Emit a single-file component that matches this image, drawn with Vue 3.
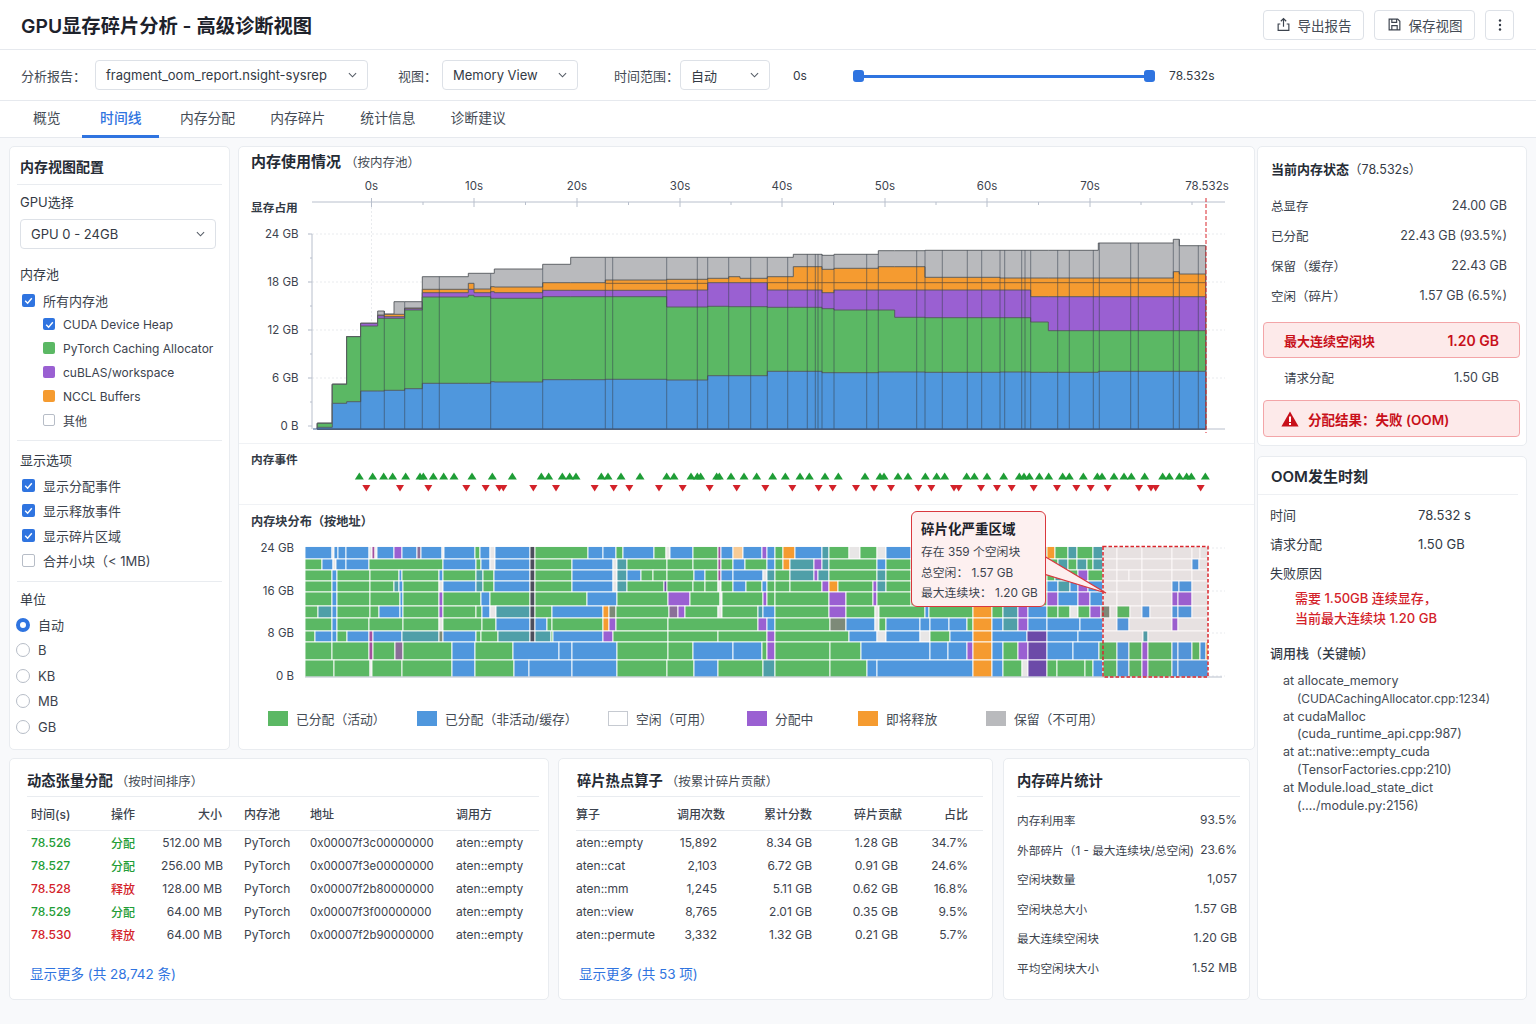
<script setup>
// 时间线图：zoom 坐标换算成页面坐标
const lx = (v) => 240 + v / 3
const rx = (v) => 740 + v / 3
const zy = (v) => 150 + v / 3

// [起点, 终点, 蓝, 绿, 紫, 橙, 灰]
const leftSegs = [
  [232, 277, 832, 820, 820, 820, 820],
  [277, 320, 760, 703, 703, 703, 703],
  [320, 362, 755, 560, 560, 560, 560],
  [362, 413, 723, 528, 520, 520, 520],
  [413, 433, 723, 505, 497, 495, 483],
  [433, 462, 721, 505, 500, 493, 492],
  [462, 494, 721, 505, 500, 493, 455],
  [494, 547, 716, 480, 476, 474, 455],
  [547, 685, 700, 441, 428, 418, 380],
  [685, 702, 700, 436, 418, 400, 370],
  [702, 752, 700, 440, 428, 417, 370],
  [752, 763, 695, 445, 425, 410, 370],
  [763, 908, 696, 445, 428, 411, 357],
  [908, 992, 689, 440, 421, 398, 343],
  [992, 1096, 689, 440, 421, 398, 322],
  [1096, 1280, 688, 440, 421, 390, 322],
  [1280, 1403, 690, 471, 420, 388, 322],
  [1403, 1466, 677, 469, 398, 385, 322],
  [1466, 1500, 677, 470, 398, 380, 322],
]
const rightSegs = [
  [0, 82, 677, 470, 398, 385, 322],
  [82, 160, 664, 472, 420, 380, 322],
  [160, 246, 664, 472, 420, 350, 313],
  [246, 282, 668, 476, 428, 358, 316],
  [282, 415, 668, 480, 420, 355, 313],
  [415, 464, 666, 480, 420, 350, 302],
  [464, 555, 666, 502, 420, 350, 302],
  [555, 780, 667, 503, 420, 382, 301],
  [780, 872, 666, 503, 420, 384, 301],
  [872, 925, 667, 516, 440, 384, 301],
  [925, 1075, 667, 542, 440, 384, 301],
  [1075, 1300, 664, 542, 440, 384, 279],
  [1300, 1318, 664, 542, 440, 365, 268],
  [1318, 1397, 664, 542, 440, 372, 287],
]
const segs = [
  ...leftSegs.map((s) => [lx(s[0]), lx(s[1]), ...s.slice(2).map(zy)]),
  ...rightSegs.map((s) => [rx(s[0]), rx(s[1]), ...s.slice(2).map(zy)]),
]
const layerColors = [
  { idx: 6, color: '#b9babd' },
  { idx: 5, color: '#f59b30' },
  { idx: 4, color: '#9a60d2' },
  { idx: 3, color: '#5bb864' },
  { idx: 2, color: '#4f97dd' },
]
const base = 429
const layers = layerColors.map((l) => {
  let d = `M${segs[0][0]} ${base}`
  segs.forEach((s) => {
    d += `L${s[0].toFixed(1)} ${s[l.idx].toFixed(1)}L${s[1].toFixed(1)} ${s[l.idx].toFixed(1)}`
  })
  d += `L${segs[segs.length - 1][1].toFixed(1)} ${base}Z`
  return { d, color: l.color }
})
const vLinesRaw = [
  ...[362, 433, 494, 547, 598, 752, 908, 1096, 1118, 1280, 1372, 1403, 1466].map(lx),
  ...[32, 82, 143, 202, 226, 234, 246, 282, 380, 415, 530, 555, 607, 682, 725, 780, 794, 845, 855, 872, 953, 988, 1060, 1078, 1172, 1195, 1300, 1318, 1375].map(rx),
]
const vLines = vLinesRaw.map((x) => {
  const seg = segs.find((s) => x >= s[0] && x <= s[1]) || segs[0]
  return { x: x.toFixed(1), top: seg[6].toFixed(1) }
})
const orangeLine = `M${lx(1096)} ${zy(400)}L${lx(1403)} ${zy(400)}M${rx(82)} ${zy(398)}L${rx(1397)} ${zy(398)}`

const timeTicks = [
  ['0s', 371.5], ['10s', 474], ['20s', 577], ['30s', 680], ['40s', 782], ['50s', 885], ['60s', 987], ['70s', 1090],
]
const minorTicks = [423, 525.5, 628.5, 731, 833.5, 936, 1038.5, 1141, 1192]
const memTicks = [['24 GB', 234], ['18 GB', 282], ['12 GB', 330], ['6 GB', 378]]
const minorMem = [258, 306, 354, 402]

const upEvents = [
  ...[358, 398, 431, 458, 497, 540, 550, 580, 611, 642, 696, 757, 817, 904, 926, 967, 989, 1008, 1084, 1104, 1143, 1200, 1280, 1302, 1353, 1372, 1382, 1430, 1438, 1473].map(lx),
  ...[12, 50, 98, 136, 180, 208, 255, 295, 375, 420, 432, 474, 504, 556, 590, 614, 680, 703, 741, 791, 838, 852, 868, 898, 926, 968, 988, 1030, 1072, 1086, 1122, 1152, 1174, 1214, 1268, 1288, 1318, 1340, 1354, 1396].map(rx),
]
const downEvents = [
  ...[379, 480, 565, 679, 737, 778, 790, 880, 948, 1064, 1121, 1168, 1257, 1328, 1409, 1490].map(lx),
  ...[76, 157, 236, 278, 348, 402, 453, 535, 574, 642, 656, 723, 771, 815, 881, 951, 1009, 1052, 1103, 1197, 1233, 1247, 1382].map(rx),
]
const upPts = (x) => `${x - 4.5},479.5 ${x + 4.5},479.5 ${x},472.5`
const downPts = (x) => `${x - 4},485 ${x + 4},485 ${x},491.5`

// 内存块分布：每行一串 “颜色+结束x”
const blockColors = {
  g: '#5bb864', b: '#4f97dd', p: '#9a60d2', o: '#f59b30', l: '#e8e6e6', m: '#a4509f', q: '#8a6f98',
  d: '#4c4e5c', t: '#4f9fa8', e: '#f8cb95', D: '#6c4aa8', k: '#7d8a78', y: '#b9babd',
}
const rows = [
  [546.5, 559, 'b332 l334 b338 b346 b369 l372 m375 l377 b394 p402 b417 q421 b442 l444 b475 g480 b490 l495 b530 d535 g588 b603 b616 g623 b654 g666 l670 b693 g718 m721 b733 e743 b762 p767 b775 g783 o795 b822 t829 g849 l860 g877 l886 b911 g1047 o1055 g1068 t1077 g1093 t1103 l1117 l1142 l1172 l1192 l1200 l1208'],
  [559, 570, 'g322 b333 l336 b346 b369 g443 b476 g481 b490 l495 b530 d535 g572 b613 l617 t627 g667 g693 g718 m721 g733 b745 g767 b775 g783 o790 t814 p822 t829 g877 b886 g911 g1047 g1058 t1068 g1077 t1087 g1093 t1103 l1117 l1142 l1172 l1192 b1199 l1208'],
  [570, 581, 'g332 b337 g370 g399 b402 g439 b443 g476 t483 g494 b530 d535 g572 b613 l617 t627 b641 g653 g667 g694 b705 g718 m721 b733 b763 l767 t775 g790 t814 p818 t829 g877 t886 g911 g1047 g1055 t1068 g1078 p1088 g1103 l1117 l1129 l1142 l1172 l1192 l1208'],
  [581, 592, 'g332 b337 g370 g394 t399 b403 g439 l443 b476 t483 g494 b530 d535 g572 b613 l617 t627 g664 D667 g693 g705 g718 l721 g733 b746 g762 b767 g775 g790 g822 p829 o838 g873 p877 t886 g911 g1047 b1058 t1070 b1078 p1088 b1103 l1117 l1142 l1172 b1179 b1192 l1208'],
  [592, 606, 'g332 b337 g370 g400 b403 g439 p443 g481 b490 g530 d535 g587 b617 g668 p690 g720 l722 g763 p767 g775 g829 p846 g873 p877 g911 g1047 p1058 b1078 p1090 b1103 l1117 l1142 l1172 p1178 p1192 l1208'],
  [606, 618, 'g318 t332 b337 g370 g379 b400 b403 g439 p443 g476 g482 b490 l496 t530 d535 g552 b603 o609 k616 g669 q678 p685 g718 l722 g758 t763 b775 g829 p846 g875 l879 g925 b929 g973 o992 g1003 t1018 p1028 b1047 g1058 g1070 l1078 g1090 p1101 k1110 l1117 g1130 l1142 b1150 l1172 b1178 b1192 l1208'],
  [618, 631, 'g332 b337 g369 g403 g439 l443 g482 g496 b530 d535 b547 g552 g603 o609 p616 g668 g758 p767 b775 g830 k846 b875 l879 g886 b920 b930 b949 b967 g973 o992 b1003 t1018 p1028 b1047 b1080 b1103 l1117 b1129 l1172 p1178 l1208'],
  [631, 642, 'g315 b332 b337 g347 b369 m373 b402 t439 k443 b476 g481 g498 t530 d535 t551 g553 b603 p613 g668 g718 g767 p775 g849 b877 l886 b920 l930 g950 b973 o992 b1027 D1047 b1078 b1103 l1143 t1148 l1208'],
  [642, 660, 'g332 g369 m373 g395 q403 g452 b475 g513 b559 b572 b617 g668 g693 b733 b762 g767 p775 g830 g861 b930 b948 b967 p973 o992 b1003 g1018 p1028 D1047 b1073 b1099 g1117 b1129 g1142 p1148 g1172 b1178 b1192 g1200 b1206 o1208'],
  [660, 677, 'g334 g370 l372 g402 g452 b475 g514 b529 b572 b617 g667 g694 b718 g763 t775 g830 g867 b877 b973 o992 b1003 g1022 l1028 D1047 g1057 g1085 g1093 b1103 g1117 b1129 g1142 p1148 g1172 b1178 b1208'],
]
const blocks = []
rows.forEach(([y0, y1, str]) => {
  let start = 305
  str.split(' ').forEach((tok) => {
    const end = Number(tok.slice(1))
    blocks.push({ x: start, y: y0, w: Math.max(end - start, 0.5), h: y1 - y0, c: blockColors[tok[0]] })
    start = end
  })
})
const blockTicks = [['24 GB', 548], ['16 GB', 591], ['8 GB', 633], ['0 B', 676]]

const legend = [
  { label: '已分配（活动）', cls: 'lg-green' },
  { label: '已分配（非活动/缓存）', cls: 'lg-blue' },
  { label: '空闲（可用）', cls: 'lg-free' },
  { label: '分配中', cls: 'lg-purple' },
  { label: '即将释放', cls: 'lg-orange' },
  { label: '保留（不可用）', cls: 'lg-gray' },
]

const tabs = ['概览', '时间线', '内存分配', '内存碎片', '统计信息', '诊断建议']
const pools = [
  { label: 'CUDA Device Heap', cls: 'on' },
  { label: 'PyTorch Caching Allocator', cls: 'sw-green' },
  { label: 'cuBLAS/workspace', cls: 'sw-purple' },
  { label: 'NCCL Buffers', cls: 'sw-orange' },
  { label: '其他', cls: 'off' },
]
const showOpts = [
  { label: '显示分配事件', on: true },
  { label: '显示释放事件', on: true },
  { label: '显示碎片区域', on: true },
  { label: '合并小块（< 1MB)', on: false },
]
const units = ['自动', 'B', 'KB', 'MB', 'GB']

const memStats = [
  ['总显存', '24.00 GB'],
  ['已分配', '22.43 GB (93.5%)'],
  ['保留（缓存）', '22.43 GB'],
  ['空闲（碎片）', '1.57 GB (6.5%)'],
]
const stack = [
  ['at allocate_memory', false],
  ['(CUDACachingAllocator.cpp:1234)', true],
  ['at cudaMalloc', false],
  ['(cuda_runtime_api.cpp:987)', true],
  ['at at::native::empty_cuda', false],
  ['(TensorFactories.cpp:210)', true],
  ['at Module.load_state_dict', false],
  ['(…./module.py:2156)', true],
]
const tensors = [
  ['78.526', '分配', '512.00 MB', 'PyTorch', '0x00007f3c00000000', 'aten::empty', 'up'],
  ['78.527', '分配', '256.00 MB', 'PyTorch', '0x00007f3e00000000', 'aten::empty', 'up'],
  ['78.528', '释放', '128.00 MB', 'PyTorch', '0x00007f2b80000000', 'aten::empty', 'down'],
  ['78.529', '分配', '64.00 MB', 'PyTorch', '0x00007f3f00000000', 'aten::empty', 'up'],
  ['78.530', '释放', '64.00 MB', 'PyTorch', '0x00007f2b90000000', 'aten::empty', 'down'],
]
const hotOps = [
  ['aten::empty', '15,892', '8.34 GB', '1.28 GB', '34.7%'],
  ['aten::cat', '2,103', '6.72 GB', '0.91 GB', '24.6%'],
  ['aten::mm', '1,245', '5.11 GB', '0.62 GB', '16.8%'],
  ['aten::view', '8,765', '2.01 GB', '0.35 GB', '9.5%'],
  ['aten::permute', '3,332', '1.32 GB', '0.21 GB', '5.7%'],
]
const fragStats = [
  ['内存利用率', '93.5%'],
  ['外部碎片（1 - 最大连续块/总空闲)', '23.6%'],
  ['空闲块数量', '1,057'],
  ['空闲块总大小', '1.57 GB'],
  ['最大连续空闲块', '1.20 GB'],
  ['平均空闲块大小', '1.52 MB'],
]
</script>

<template>
  <div class="page">
    <header class="topbar">
      <h1>GPU显存碎片分析 - 高级诊断视图</h1>
      <div class="actions">
        <button class="btn">
          <svg width="15" height="15" viewBox="0 0 14 14" fill="none" stroke="#3c434e" stroke-width="1.1"><path d="M7 9V1.5M4.5 4L7 1.5 9.5 4M4 6.5H2v6h10v-6h-2" /></svg>
          导出报告
        </button>
        <button class="btn">
          <svg width="15" height="15" viewBox="0 0 14 14" fill="none" stroke="#3c434e" stroke-width="1.1"><path d="M2 2h8l2 2v8H2zM4.5 2v3h4.5V2M4.5 12V8h5v4" /></svg>
          保存视图
        </button>
        <button class="btn more">
          <svg width="4" height="14" viewBox="0 0 4 14" fill="#333a45"><circle cx="2" cy="2.5" r="1.2" /><circle cx="2" cy="7" r="1.2" /><circle cx="2" cy="11.5" r="1.2" /></svg>
        </button>
      </div>
    </header>

    <div class="toolbar">
      <span class="tool-label">分析报告：</span>
      <div class="select report">
        <span>fragment_oom_report.nsight-sysrep</span>
        <svg class="chev" viewBox="0 0 10 6"><path d="M1 1l4 4 4-4" /></svg>
      </div>
      <span class="tool-label view-label">视图：</span>
      <div class="select view">
        <span>Memory View</span>
        <svg class="chev" viewBox="0 0 10 6"><path d="M1 1l4 4 4-4" /></svg>
      </div>
      <span class="tool-label range-label">时间范围：</span>
      <div class="select range">
        <span>自动</span>
        <svg class="chev" viewBox="0 0 10 6"><path d="M1 1l4 4 4-4" /></svg>
      </div>
      <span class="range-start">0s</span>
      <div class="slider"><i class="thumb"></i><i class="thumb"></i></div>
      <span class="range-end">78.532s</span>
    </div>

    <nav class="tabs">
      <a v-for="t in tabs" :key="t" :class="{ active: t === '时间线' }">{{ t }}</a>
    </nav>

    <main class="layout">
      <div class="left-area">
        <div class="top-row">
          <aside class="card sidebar">
            <div class="side-title">内存视图配置</div>
            <div class="side-sec">
              <div class="side-label first">GPU选择</div>
              <div class="select gpu">
                <span>GPU 0 - 24GB</span>
                <svg class="chev" viewBox="0 0 10 6"><path d="M1 1l4 4 4-4" /></svg>
              </div>
              <div class="side-label pool-label">内存池</div>
              <label class="opt">
                <i class="check"><svg viewBox="0 0 10 10"><path d="M2 5.2l2.2 2.2L8 3" /></svg></i>所有内存池
              </label>
              <label v-for="p in pools" :key="p.label" class="opt sub">
                <i v-if="p.cls === 'on'" class="check small"><svg viewBox="0 0 10 10"><path d="M2 5.2l2.2 2.2L8 3" /></svg></i>
                <i v-else class="swatch" :class="p.cls"></i>{{ p.label }}
              </label>
            </div>
            <div class="side-sec ruled show-sec">
              <div class="side-label">显示选项</div>
              <label v-for="o in showOpts" :key="o.label" class="opt opt-show">
                <i v-if="o.on" class="check"><svg viewBox="0 0 10 10"><path d="M2 5.2l2.2 2.2L8 3" /></svg></i>
                <i v-else class="swatch off big"></i>{{ o.label }}
              </label>
            </div>
            <div class="side-sec ruled unit-sec">
              <div class="side-label">单位</div>
              <label v-for="(u, i) in units" :key="u" class="opt opt-unit">
                <i class="radio" :class="{ sel: i === 0 }"></i>{{ u }}
              </label>
            </div>
          </aside>

          <section class="card center">
            <div class="center-title"><b>内存使用情况</b><span>（按内存池）</span></div>
            <svg class="chart" width="1015" height="267" viewBox="239 176 1015 267">
              <text class="ax-title" x="251" y="212">显存占用</text>
              <line x1="312" y1="202" x2="1225" y2="202" class="axis" />
              <line v-for="m in minorTicks" :key="m" :x1="m" y1="202" :x2="m" y2="205" class="axis" />
              <template v-for="t in timeTicks" :key="t[0]">
                <line :x1="t[1]" y1="198" :x2="t[1]" y2="207" class="axis" />
                <text class="ax" :x="t[1]" y="190" text-anchor="middle">{{ t[0] }}</text>
              </template>
              <text class="ax" x="1207" y="190" text-anchor="middle">78.532s</text>
              <line x1="371.5" y1="207" x2="371.5" y2="429" class="grid" />
              <template v-for="t in memTicks" :key="t[0]">
                <line x1="308" :y1="t[1]" x2="1225" :y2="t[1]" class="grid" />
                <line x1="308" :y1="t[1]" x2="312" :y2="t[1]" class="axis" />
                <text class="ax" x="298.5" :y="t[1] + 4" text-anchor="end">{{ t[0] }}</text>
              </template>
              <line v-for="m in minorMem" :key="m" x1="310" :y1="m" x2="312" :y2="m" class="axis" />
              <text class="ax" x="298.5" y="430" text-anchor="end">0 B</text>
              <line x1="312" y1="234" x2="312" y2="429" class="axis" />
              <line x1="308" y1="426" x2="312" y2="426" class="axis" />
              <line x1="1206" y1="429" x2="1225" y2="429" class="axis" />
              <path v-for="l in layers" :key="l.color" :d="l.d" :fill="l.color" class="area" />
              <line v-for="v in vLines" :key="v.x" :x1="v.x" :y1="v.top" :x2="v.x" y2="429" class="sep" />
              <path :d="orangeLine" class="orange-line" />
              <line x1="313" y1="429" x2="1206" y2="429" class="base" />
              <line x1="1206" y1="198" x2="1206" y2="433" class="oom-line" />
            </svg>

            <div class="events-wrap">
              <svg class="events" width="1015" height="60" viewBox="239 444 1015 60">
                <text class="ax-title" x="251" y="464">内存事件</text>
                <polygon v-for="(x, i) in upEvents" :key="'u' + i" :points="upPts(x)" fill="#1f9d36" />
                <polygon v-for="(x, i) in downEvents" :key="'d' + i" :points="downPts(x)" fill="#d3222a" />
              </svg>
            </div>

            <div class="blocks-wrap">
              <svg class="chart" width="1015" height="197" viewBox="239 505 1015 197">
                <text class="ax-title blocks-title" x="251" y="526">内存块分布（按地址）</text>
                <template v-for="t in blockTicks" :key="t[0]">
                  <text class="ax" x="294" :y="t[1] + 4" text-anchor="end">{{ t[0] }}</text>
                  <line x1="1208" :y1="t[1]" x2="1225" :y2="t[1]" class="grid" />
                </template>
                <rect x="305" y="546" width="903" height="131" fill="#fff" />
                <rect v-for="(b, i) in blocks" :key="i" :x="b.x" :y="b.y" :width="b.w" :height="b.h" :fill="b.c" stroke="#fff" stroke-width="0.9" />
                <line x1="305" y1="677" x2="1222" y2="677" class="axis" />
                <rect x="1103" y="546.5" width="105" height="130.5" class="hot-zone" />
                <polygon points="1044,556 1106,593 1044,574" class="arrow" />
              </svg>
              <div class="tip">
                <div class="tip-title">碎片化严重区域</div>
                <div>存在 359 个空闲块</div>
                <div>总空闲： 1.57 GB</div>
                <div>最大连续块： 1.20 GB</div>
              </div>
            </div>

            <div class="legend">
              <span v-for="l in legend" :key="l.label" class="lg-item"><i :class="l.cls"></i>{{ l.label }}</span>
            </div>
          </section>
        </div>

        <div class="bottom-row">
          <section class="card tensors">
            <div class="card-head"><b>动态张量分配</b><span>（按时间排序）</span></div>
            <div class="t-row t-head tensor-grid">
              <span>时间(s)</span><span>操作</span><span class="num">大小</span><span class="pad">内存池</span><span>地址</span><span>调用方</span>
            </div>
            <div v-for="r in tensors" :key="r[0]" class="t-row tensor-grid">
              <span :class="r[6]">{{ r[0] }}</span><span :class="r[6]">{{ r[1] }}</span><span class="num">{{ r[2] }}</span><span class="pad">{{ r[3] }}</span><span class="addr">{{ r[4] }}</span><span>{{ r[5] }}</span>
            </div>
            <a class="more-link tensor-more">显示更多 (共 28,742 条)</a>
          </section>

          <section class="card hot">
            <div class="card-head"><b>碎片热点算子</b><span>（按累计碎片贡献）</span></div>
            <div class="t-row t-head hot-grid">
              <span>算子</span><span class="num">调用次数</span><span class="num">累计分数</span><span class="num">碎片贡献</span><span class="num">占比</span>
            </div>
            <div v-for="r in hotOps" :key="r[0]" class="t-row hot-grid">
              <span>{{ r[0] }}</span><span class="num calls">{{ r[1] }}</span><span class="num">{{ r[2] }}</span><span class="num frag">{{ r[3] }}</span><span class="num">{{ r[4] }}</span>
            </div>
            <a class="more-link hot-more">显示更多 (共 53 项)</a>
          </section>

          <section class="card frag-stats">
            <div class="card-head frag-head"><b>内存碎片统计</b></div>
            <div class="frag-list">
              <div v-for="r in fragStats" :key="r[0]" class="frag-row"><span class="frag-name">{{ r[0] }}</span><span>{{ r[1] }}</span></div>
            </div>
          </section>
        </div>
      </div>

      <div class="right-col">
        <section class="card status">
          <div class="status-title"><b>当前内存状态</b><span>（78.532s）</span></div>
          <div class="status-list">
            <div v-for="r in memStats" :key="r[0]" class="status-row"><span>{{ r[0] }}</span><span>{{ r[1] }}</span></div>
          </div>
          <div class="alert largest"><span>最大连续空闲块</span><span>1.20 GB</span></div>
          <div class="status-row req"><span>请求分配</span><span>1.50 GB</span></div>
          <div class="alert result">
            <svg width="18" height="16" viewBox="0 0 18 16"><path d="M9 .5L17.6 15.5H.4z" fill="#c8101a" /><rect x="8" y="5.5" width="2" height="5.5" fill="#fff" /><rect x="8" y="12" width="2" height="2" fill="#fff" /></svg>
            <span>分配结果：失败 (OOM)</span>
          </div>
        </section>

        <section class="card oom">
          <div class="oom-title">OOM发生时刻</div>
          <div class="oom-row"><span>时间</span><span>78.532 s</span></div>
          <div class="oom-row"><span>请求分配</span><span>1.50 GB</span></div>
          <div class="oom-row"><span>失败原因</span></div>
          <div class="reason">需要 1.50GB 连续显存，</div>
          <div class="reason">当前最大连续块 1.20 GB</div>
          <div class="stack-title">调用栈（关键帧）</div>
          <div class="stack">
            <div v-for="s in stack" :key="s[0]" :class="{ indent: s[1] }">{{ s[0] }}</div>
          </div>
        </section>
      </div>
    </main>
  </div>
</template>

<style scoped>
.page {
  width: 1536px;
  height: 1024px;
  overflow: hidden;
  background: #f8f9fb;
  color: #333a45;
  font-family: Inter, "Noto Sans CJK SC", sans-serif;
  font-size: 13px;
}
.topbar {
  height: 50px;
  box-sizing: border-box;
  display: flex;
  align-items: center;
  justify-content: space-between;
  padding: 0 22px 0 21px;
  background: #fff;
  border-bottom: 1px solid #e6e9ee;
}
h1 {
  margin: 0;
  font-size: 19.3px;
  font-weight: 600;
  color: #1d222b;
}
.actions {
  display: flex;
  gap: 10px;
}
.btn {
  height: 30px;
  width: 101px;
  display: flex;
  align-items: center;
  justify-content: center;
  gap: 7px;
  background: #fff;
  border: 1px solid #dde1e7;
  border-radius: 4px;
  color: #444b55;
  font: inherit;
  font-size: 13.5px;
}
.btn.more {
  width: 29px;
}
.toolbar {
  height: 51px;
  box-sizing: border-box;
  display: flex;
  align-items: center;
  padding-left: 21px;
  background: #fff;
  border-bottom: 1px solid #e6e9ee;
}
.tool-label {
  color: #444b55;
  font-size: 13px;
}
.select {
  height: 30px;
  box-sizing: border-box;
  display: flex;
  align-items: center;
  justify-content: space-between;
  padding: 0 10px;
  background: #fff;
  border: 1px solid #dde1e7;
  border-radius: 4px;
  font-size: 13px;
  color: #333a45;
}
.chev {
  width: 9px;
  height: 6px;
  fill: none;
  stroke: #555c66;
  stroke-width: 1.2;
}
.report {
  width: 273px;
  margin-left: 9px;
}
.view-label {
  margin-left: 30px;
}
.view {
  width: 136px;
  margin-left: 5px;
}
.range-label {
  margin-left: 36px;
}
.range {
  width: 90px;
  margin-left: 1px;
}
.range-start {
  margin-left: 23px;
  width: 60px;
  font-size: 12px;
  margin-top: 1px;
}
.slider {
  width: 302px;
  height: 3px;
  margin-right: 14px;
  margin-top: 2px;
  background: #2f74e0;
  display: flex;
  align-items: center;
  justify-content: space-between;
}
.thumb {
  width: 11px;
  height: 12px;
  border-radius: 3px;
  background: #2f74e0;
}
.range-end {
  font-size: 12px;
  margin-top: 1px;
}
.tabs {
  height: 37px;
  display: flex;
  padding-left: 15.5px;
  background: #fff;
  border-bottom: 1px solid #e6e9ee;
  box-sizing: border-box;
}
.tabs a {
  padding: 0 17.5px;
  line-height: 34px;
  font-size: 13.8px;
  color: #444b55;
}
.tabs a.active {
  color: #2f74e0;
  font-weight: 500;
  padding: 0 18px;
  margin: 0 3px 0 4px;
  border-bottom: 3px solid #2f74e0;
  height: 37px;
  box-sizing: border-box;
}
.layout {
  display: flex;
  align-items: flex-start;
  gap: 2px;
  padding: 8px 9px 0;
}
.left-area {
  width: 1246px;
}
.top-row {
  display: flex;
  gap: 8px;
}
.card {
  background: #fff;
  border: 1px solid #e9ecf0;
  border-radius: 5px;
  box-sizing: border-box;
}
.sidebar {
  width: 221px;
  height: 604px;
  padding: 0 7px;
}
.side-title {
  height: 37px;
  line-height: 40px;
  padding-left: 3px;
  font-size: 14px;
  font-weight: 600;
  color: #252b35;
  border-bottom: 1px solid #e9ecf0;
}
.side-sec {
  padding: 0 2px;
}
.side-sec.ruled {
  margin-top: 8px;
  border-top: 1px solid #e9ecf0;
  padding-top: 8px;
}
.side-sec.show-sec {
  padding-top: 9px;
}
.side-label {
  height: 20px;
  line-height: 20px;
  padding-left: 1px;
  font-size: 13px;
  color: #333a45;
}
.side-label.first {
  margin-top: 7px;
}
.pool-label {
  margin-top: 15px;
}
.gpu {
  margin-top: 7px;
  width: 196px;
  margin-left: 1px;
}
.opt {
  height: 24px;
  display: flex;
  align-items: center;
  gap: 8px;
  padding-left: 3px;
  font-size: 13px;
  color: #3c434e;
  white-space: nowrap;
}
.side-label + .opt {
  margin-top: 3px;
}
.side-label.pool-label + .opt {
  margin-top: 4px;
}
.opt.sub {
  padding-left: 24px;
  font-size: 12px;
}
.opt-show {
  height: 25px;
}
.opt-unit {
  height: 25.5px;
}
.side-sec .opt-unit {
  margin-top: 0;
}
.side-sec.unit-sec .side-label {
  margin-bottom: 3px;
  margin-top: -1px;
}
.check {
  width: 13px;
  height: 13px;
  border-radius: 2px;
  background: #2f74e0;
  display: flex;
  align-items: center;
  justify-content: center;
  flex: none;
}
.check svg {
  width: 11px;
  height: 11px;
  fill: none;
  stroke: #fff;
  stroke-width: 1.3;
}
.check.small {
  width: 12px;
  height: 12px;
}
.swatch {
  width: 12px;
  height: 12px;
  border-radius: 2px;
  flex: none;
  box-sizing: border-box;
}
.swatch.big {
  width: 13px;
  height: 13px;
}
.sw-green { background: #5bb864; }
.sw-purple { background: #9a60d2; }
.sw-orange { background: #f59b30; }
.swatch.off {
  background: #fff;
  border: 1px solid #b7bdc7;
}
.radio {
  width: 14px;
  height: 14px;
  flex: none;
  box-sizing: border-box;
  border: 1px solid #b7bdc7;
  border-radius: 50%;
  margin-left: -6px;
  margin-right: 0;
  background: #fff;
}
.radio.sel {
  border: 4px solid #2f74e0;
}
.center {
  width: 1017px;
  height: 604px;
}
.center-title {
  height: 29px;
  line-height: 29px;
  padding-left: 12px;
}
.center-title b {
  font-size: 15px;
  font-weight: 600;
  color: #252b35;
}
.center-title span {
  font-size: 12.5px;
  color: #444b55;
  margin-left: 4px;
}
svg.chart,
svg.events {
  display: block;
  font-family: Inter, "Noto Sans CJK SC", sans-serif;
}
.ax {
  font-size: 11.5px;
  fill: #3c434e;
}
.ax-title {
  font-size: 11.7px;
  font-weight: 600;
  fill: #333a45;
}
.blocks-title {
  font-size: 12.2px;
}
.axis {
  stroke: #b8bfcc;
  stroke-width: 1;
}
.grid {
  stroke: #e3e6ea;
  stroke-width: 0.8;
  stroke-dasharray: 2 2;
}
.area {
  stroke: #55585c;
  stroke-width: 0.9;
}
.sep {
  stroke: #38424f;
  stroke-width: 0.8;
  opacity: 0.7;
}
.orange-line {
  stroke: #6a5338;
  stroke-width: 0.8;
  fill: none;
}
.base {
  stroke: #3a5f8f;
  stroke-width: 1;
}
.oom-line {
  stroke: #d9262c;
  stroke-width: 1;
  stroke-dasharray: 4 2;
}
.events-wrap {
  height: 62px;
  box-sizing: border-box;
  border-top: 1px solid #f0f2f5;
  border-bottom: 1px solid #f0f2f5;
}
.blocks-wrap {
  position: relative;
}
.hot-zone {
  fill: rgba(220, 60, 60, 0.025);
  stroke: #d9262c;
  stroke-width: 1.5;
  stroke-dasharray: 3.5 2;
}
.arrow {
  fill: #fdeeee;
  stroke: #d9383e;
  stroke-width: 1.3;
}
.tip {
  position: absolute;
  left: 672px;
  top: 6px;
  width: 135px;
  height: 96px;
  box-sizing: border-box;
  padding: 7px 0 0 9px;
  background: #fdf0f0;
  border: 1px solid #d9383e;
  border-radius: 6px;
  font-size: 11.8px;
  line-height: 20.5px;
  color: #3c434e;
  white-space: nowrap;
}
.tip-title {
  font-size: 13.5px;
  font-weight: 600;
  color: #1d222b;
  line-height: 20px;
  margin-bottom: 3px;
}
.legend {
  display: grid;
  grid-template-columns: 149px 191px 139px 111px 128px auto;
  padding-left: 29px;
  margin-top: 7px;
}
.lg-item {
  display: flex;
  align-items: center;
  gap: 8px;
  font-size: 12.8px;
  color: #444b55;
}
.lg-item i {
  width: 20px;
  height: 15px;
  box-sizing: border-box;
}
.lg-green { background: #5bb864; }
.lg-blue { background: #4f97dd; }
.lg-free { background: #fff; border: 1px solid #c6cad1; }
.lg-purple { background: #9a60d2; }
.lg-orange { background: #f59b30; }
.lg-gray { background: #b9babd; }
.bottom-row {
  display: flex;
  margin-top: 8px;
  height: 242px;
}
.tensors {
  width: 540px;
  margin-right: 9px;
}
.hot {
  width: 435px;
  margin-right: 10px;
}
.frag-stats {
  width: 247px;
}
.card-head {
  height: 37px;
  line-height: 44px;
  margin: 0 9px 0 17px;
  border-bottom: 1px solid #e9ecf0;
}
.card-head b {
  font-size: 14.3px;
  font-weight: 600;
  color: #252b35;
}
.card-head span {
  font-size: 12.5px;
  color: #444b55;
  margin-left: 3px;
}
.hot .card-head {
  margin-left: 18px;
}
.frag-head {
  margin-left: 13px;
}
.t-row {
  display: grid;
  height: 23px;
  align-items: center;
  font-size: 12px;
  color: #3c434e;
  white-space: nowrap;
}
.t-head {
  height: 33px;
  border-bottom: 1px solid #e9ecf0;
  font-weight: 500;
}
.tensor-grid {
  grid-template-columns: 80px 50px 61px 88px 146px 1fr;
  margin-left: 17px;
  margin-right: 9px;
  padding-left: 4px;
}
.hot-grid {
  grid-template-columns: 100px 49px 87px 90px 66px;
  margin-left: 17px;
  margin-right: 9px;
}
.addr {
  font-size: 11.4px;
}
.num {
  text-align: right;
}
.pad {
  padding-left: 22px;
}
.calls {
  padding-right: 8px;
}
.frag {
  padding-right: 4px;
}
.up {
  color: #1f9d36;
  font-weight: 500;
}
.down {
  color: #d3222a;
  font-weight: 500;
}
.more-link {
  display: block;
  margin-top: 18px;
  font-size: 13.5px;
  color: #2f74e0;
  line-height: 20px;
}
.tensor-more {
  padding-left: 20px;
}
.hot-more {
  padding-left: 20px;
}
.frag-list {
  padding: 8px 12px 0 13px;
}
.frag-row {
  height: 29.5px;
  display: flex;
  align-items: center;
  justify-content: space-between;
  font-size: 12px;
  color: #3c434e;
  white-space: nowrap;
}
.frag-name {
  font-size: 11.7px;
}
.right-col {
  width: 270px;
  display: flex;
  flex-direction: column;
  gap: 10px;
}
.status {
  height: 300px;
  padding-top: 11px;
}
.status-title {
  height: 22px;
  line-height: 22px;
  padding-left: 13px;
  font-size: 12.5px;
}
.status-title b {
  font-weight: 600;
  font-size: 13px;
  color: #252b35;
}
.status-list {
  margin-top: 10px;
}
.status-row {
  height: 30px;
  display: flex;
  align-items: center;
  justify-content: space-between;
  padding: 0 19px 0 13px;
  font-size: 12.5px;
  color: #3c434e;
}
.status-row.req {
  padding: 0 27px 0 26px;
  margin-top: 4px;
}
.alert {
  margin: 0 6px 0 5px;
  display: flex;
  align-items: center;
  background: #fdeaea;
  border: 1px solid #f3a5a8;
  border-radius: 4px;
  box-sizing: border-box;
  color: #c8101a;
  font-weight: 600;
}
.largest {
  height: 36px;
  margin-top: 12px;
  justify-content: space-between;
  padding: 0 20px;
  font-size: 13px;
}
.largest span:last-child {
  font-size: 14px;
}
.result {
  height: 37px;
  margin-top: 8px;
  padding-left: 17px;
  gap: 9px;
  font-size: 13.5px;
}
.oom {
  height: 544px;
}
.oom-title {
  height: 37px;
  line-height: 40px;
  padding-left: 13px;
  font-size: 15px;
  font-weight: 600;
  color: #252b35;
  margin-right: 8px;
  border-bottom: 1px solid #eef0f3;
}
.oom-row {
  height: 29px;
  display: grid;
  grid-template-columns: 148px 1fr;
  align-items: center;
  padding-left: 12px;
  font-size: 13px;
}
.oom-row:nth-child(2) {
  margin-top: 5px;
}
.oom-row:nth-child(4) {
  margin-bottom: 1px;
}
.reason {
  height: 20px;
  line-height: 20px;
  padding-left: 37px;
  color: #d3222a;
  font-size: 13px;
  font-weight: 500;
}
.stack-title {
  margin-top: 15px;
  padding-left: 12px;
  height: 20px;
  line-height: 20px;
  font-size: 13px;
  font-weight: 500;
}
.stack {
  margin-top: 9px;
  padding-left: 25px;
  font-size: 12.5px;
  line-height: 17.8px;
  color: #444b55;
  white-space: nowrap;
}
.stack .indent {
  padding-left: 14px;
}
.stack div:nth-child(2) {
  font-size: 11.9px;
}
</style>

<style>
html, body {
  margin: 0;
  background: #f8f9fb;
}
</style>
